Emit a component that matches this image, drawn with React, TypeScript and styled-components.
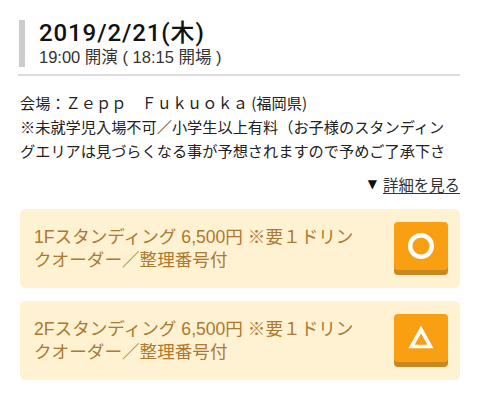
import React from 'react';
import styled, { createGlobalStyle } from 'styled-components';

const GlobalStyle = createGlobalStyle`
  html, body {
    margin: 0;
    padding: 0;
    background: #fff;
  }
  body {
    font-family: 'Liberation Sans', 'Noto Sans CJK JP', sans-serif;
    color: #222;
  }
`;

const Page = styled.div`
  width: 480px;
  padding: 20px 20px 0 20px;
  box-sizing: border-box;
`;

const Header = styled.div`
  display: flex;
  flex-direction: column;
  border-left: 6px solid #cccccc;
  padding-left: 14px;
  margin-left: -1px;
`;

const Title = styled.div`
  font-family: Roboto, 'Noto Sans CJK JP', sans-serif;
  font-size: 24px;
  line-height: 27px;
  font-weight: 500;
  color: #111;
  letter-spacing: 0.9px;
`;

const Sub = styled.div`
  font-size: 16.5px;
  line-height: 20px;
  color: #333;
`;

const Rule = styled.hr`
  border: none;
  height: 2px;
  background: #dcdcdc;
  margin: 7px 0 0 -2px;
`;

const Notes = styled.div`
  margin-top: 14px;
  width: 430px;
  font-family: 'Noto Sans CJK JP', sans-serif;
  font-size: 15.2px;
  line-height: 24px;
  color: #222;
  height: 72px;
  overflow: hidden;
`;

const MoreRow = styled.div`
  display: flex;
  justify-content: flex-end;
  align-items: center;
  gap: 6px;
  margin-top: 10px;
  height: 24px;
  font-family: 'Noto Sans CJK JP', sans-serif;
  font-size: 15.4px;
  color: #333;
`;

const Arrow = styled.span`
  font-family: 'DejaVu Sans', sans-serif;
  font-size: 12px;
  line-height: 12px;
  color: #111;
`;

const MoreLink = styled.a`
  line-height: 22px;
  color: #333;
  text-decoration: underline;
  text-underline-offset: 2px;
`;

const TicketList = styled.div`
  display: flex;
  flex-direction: column;
  gap: 13px;
  margin-top: 13px;
`;

const Ticket = styled.div`
  display: flex;
  align-items: center;
  gap: 28px;
  background: #fef2d3;
  border-radius: 6px;
  padding: 13px 12px 13px 14px;
  height: 79px;
  box-sizing: border-box;
`;

const TicketText = styled.div`
  flex: 1;
  font-family: 'Liberation Sans', 'Noto Sans CJK JP', sans-serif;
  font-size: 17.6px;
  line-height: 23px;
  color: #ad782f;
`;

const Mark = styled.button<{ $kind: 'circle' | 'triangle' }>`
  flex: none;
  width: 54px;
  height: 48px;
  margin-bottom: 5px;
  border: none;
  border-radius: 4px;
  background: #f8a012;
  box-shadow: 0 5px 0 #c8871f;
  display: flex;
  align-items: center;
  justify-content: center;
  padding: 0;
  cursor: pointer;
`;

function MarkIcon({ kind }: { kind: 'circle' | 'triangle' }) {
  if (kind === 'circle') {
    return (
      <svg width="28" height="28" viewBox="0 0 28 28">
        <circle cx="14" cy="14" r="10.8" fill="none" stroke="#fff" strokeWidth="4.4" />
      </svg>
    );
  }
  return (
    <svg width="26" height="24" viewBox="0 0 26 24">
      <polygon points="13,3.5 22.5,20.5 3.5,20.5" fill="none" stroke="#fff" strokeWidth="3.6" strokeLinejoin="miter" />
    </svg>
  );
}

const tickets: { label: string; kind: 'circle' | 'triangle' }[] = [
  { label: '1Fスタンディング 6,500円 ※要１ドリンクオーダー／整理番号付', kind: 'circle' },
  { label: '2Fスタンディング 6,500円 ※要１ドリンクオーダー／整理番号付', kind: 'triangle' },
];

export default function App() {
  return (
    <Page>
      <GlobalStyle />
      <Header>
        <Title>2019/2/21(木)</Title>
        <Sub>19:00 開演 ( 18:15 開場 )</Sub>
      </Header>
      <Rule />
      <Notes>
        会場：Ｚｅｐｐ　Ｆｕｋｕｏｋａ (福岡県)
        <br />
        ※未就学児入場不可／小学生以上有料（お子様のスタンディングエリアは見づらくなる事が予想されますので予めご了承下さい）
      </Notes>
      <MoreRow>
        <Arrow>▼</Arrow>
        <MoreLink>詳細を見る</MoreLink>
      </MoreRow>
      <TicketList>
        {tickets.map((t) => (
          <Ticket key={t.label}>
            <TicketText>{t.label}</TicketText>
            <Mark $kind={t.kind}>
              <MarkIcon kind={t.kind} />
            </Mark>
          </Ticket>
        ))}
      </TicketList>
    </Page>
  );
}
